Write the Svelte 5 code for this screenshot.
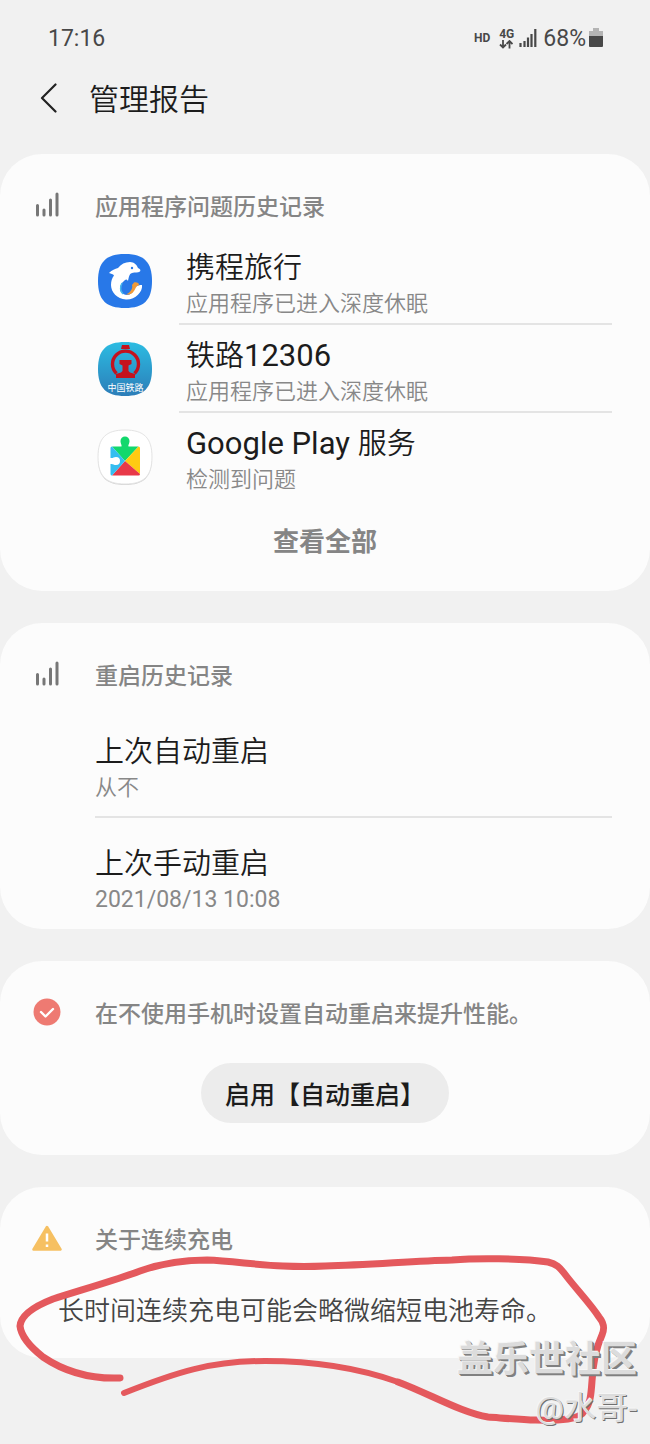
<script lang="ts">
	interface AppIssue {
		id: 'ctrip' | 'railway' | 'play';
		name: string;
		status: string;
	}

	interface RestartRecord {
		label: string;
		value: string;
	}

	const issues: AppIssue[] = [
		{ id: 'ctrip', name: '携程旅行', status: '应用程序已进入深度休眠' },
		{ id: 'railway', name: '铁路12306', status: '应用程序已进入深度休眠' },
		{ id: 'play', name: 'Google Play 服务', status: '检测到问题' },
	];

	const restarts: RestartRecord[] = [
		{ label: '上次自动重启', value: '从不' },
		{ label: '上次手动重启', value: '2021/08/13 10:08' },
	];

	// Rounded-square outline shared by all app icons
	const SQUIRCLE = 'M27 0C46 0 54 8 54 27S46 54 27 54 0 46 0 27 8 0 27 0Z';

	/** Split a string into latin and CJK runs; latin is set a little larger. */
	function runs(text: string): string[] {
		return text.match(/[\x20-\x7e]+|[^\x20-\x7e]+/g) ?? [];
	}

	function isLatin(run: string): boolean {
		return /^[\x20-\x7e]/.test(run);
	}
</script>

{#snippet barsIcon()}
	<svg class="section-icon" viewBox="0 0 30 30" aria-hidden="true">
		<path
			d="M5.500 14.500v9.500M12 19v5M18.500 9v15M25 3v21"
			fill="none"
			stroke="#777"
			stroke-width="3"
			stroke-linecap="round"
		/>
	</svg>
{/snippet}

{#snippet mixed(text: string)}
	{#each runs(text) as run}<span class:latin={isLatin(run)}>{run}</span>{/each}
{/snippet}

<div class="page">
	<div class="status-bar">
		<span class="clock">17:16</span>
		<div class="indicators">
			<span class="hd">HD</span>
			<div class="network">
				<span>4G</span>
				<svg viewBox="0 0 14 9" aria-hidden="true">
					<path d="M4 0v7M1 4.500l3 3 3-3M10.500 8.500v-7M7.500 4l3-3 3 3" fill="none" stroke="#484848" stroke-width="1.800" />
				</svg>
			</div>
			<svg class="signal" viewBox="0 0 18 18" aria-hidden="true">
				<path d="M1.500 14v4M5.500 12v6M9 8.500v9.500M12.500 5v13M16.300 0v18" fill="none" stroke="#484848" stroke-width="2.200" />
			</svg>
			<span class="percent">68%</span>
			<svg class="battery" viewBox="0 0 14 20" aria-hidden="true">
				<path d="M4 0h6v3h4v5H0V3h4Z" fill="#b4b4b4" />
				<path d="M0 8h14v10q0 1-1 1H1q-1 0-1-1Z" fill="#484848" />
			</svg>
		</div>
	</div>

	<header class="title-bar">
		<button class="back" aria-label="返回">
			<svg viewBox="0 0 18 30" aria-hidden="true">
				<path d="M15.500 1.500L2 15l13.500 13.500" fill="none" stroke="#222" stroke-width="2.200" stroke-linecap="round" stroke-linejoin="round" />
			</svg>
		</button>
		<h1>管理报告</h1>
	</header>

	<main>
		<section class="card">
			<div class="section-head">
				{@render barsIcon()}
				<h2>应用程序问题历史记录</h2>
			</div>
			<ul class="list">
				{#each issues as issue (issue.id)}
					<li class="app-row">
						<svg class="app-icon" viewBox="0 0 54 54" aria-hidden="true">
							{#if issue.id === 'ctrip'}
								<path d={SQUIRCLE} fill="#2878e8" />
								<path
									d="M11 19C14 16 17 15 20 14C23 10 27 8 32 8C36 8 39 11 40 14C42 15 43 16 42 17.500C40 19 37 18 34 19C31 20 31 23 30 27C29 25 28 25 26 27C22 30 21 35 23 38C27 43 34 41 35 37C36 33 39 31 44 31C45 38 37 46 28 45.500C19 45 13 38 13 31C13 27 14 24 16 21.500C15 20 13 20 11 19Z"
									fill="#fff"
								/>
								<path d="M36 28.500C39 28 41 29 41 31C38 32 38 34 36 37C34 40 31 41 28 40.500C33 38 35 34 34 31Z" fill="#f09a38" />
								<path d="M24 29c-2 4-2 8 1 11" fill="none" stroke="#46b8ee" stroke-width="1.500" />
								<circle cx="34" cy="14" r="1.200" fill="#2878e8" />
							{:else if issue.id === 'railway'}
								<defs>
									<linearGradient id="railway-bg" x1="0" y1="0" x2="0" y2="1">
										<stop offset="0" stop-color="#2cbce2" />
										<stop offset="1" stop-color="#2c7db8" />
									</linearGradient>
								</defs>
								<path d={SQUIRCLE} fill="url(#railway-bg)" />
								<path d="M18.500 31.500A13 13 0 1 1 36.500 31.500" fill="none" stroke="#c4121e" stroke-width="3.400" />
								<path d="M24 3h7l1 4h-9Z" fill="#c4121e" />
								<path d="M21.500 18h12v4l-3 1.500v5.500l1.500 1.500 5 1.500v4H18v-4l5-1.500 1.500-1.500v-5.500l-3-1.500Z" fill="#c4121e" />
								<text x="27.500" y="49" text-anchor="middle">中国铁路</text>
							{:else}
								<path d={SQUIRCLE} fill="#d4d4d4" transform="translate(0 1)" />
								<path d={SQUIRCLE} fill="#fff" stroke="#e4e4e4" />
								<g transform="translate(0 1)">
									<path d="M14 15.500H23.500C24 13.500 22.500 13 22.500 10a4.500 4.500 0 0 1 9 0C31.500 13 30 13.500 30.500 15.500H40.500L27 30Z" fill="#12d86c" />
									<path d="M40.500 15.500q1.500 0 1.500 1.500V43L27 30Z" fill="#ffca12" />
									<path d="M42 43q0 1.500-1.500 1.500H14L27 30Z" fill="#e83948" />
									<path d="M14 15.500L27 30 14 44.500q-1.500 0-1.500-1.500V33C15 32.500 15.500 34 18 34a4 4 0 0 0 0-8C15.500 26 15 27.500 12.500 27V17q0-1.500 1.500-1.500Z" fill="#35bdf0" />
								</g>
							{/if}
						</svg>
						<div class="app-text">
							<div class="row-title">{@render mixed(issue.name)}</div>
							<div class="row-sub">{issue.status}</div>
						</div>
					</li>
				{/each}
			</ul>
			<button class="view-all">查看全部</button>
		</section>

		<section class="card">
			<div class="section-head">
				{@render barsIcon()}
				<h2>重启历史记录</h2>
			</div>
			<ul class="list">
				{#each restarts as record (record.label)}
					<li class="restart-row">
						<div class="row-title">{record.label}</div>
						<div class="row-sub">{@render mixed(record.value)}</div>
					</li>
				{/each}
			</ul>
		</section>

		<section class="card">
			<div class="section-head">
				<svg class="section-icon" viewBox="0 0 30 30" aria-hidden="true">
					<circle cx="15" cy="14" r="13.500" fill="#ee7a72" />
					<path d="M9 14l4.500 4.500L21 11" fill="none" stroke="#fff" stroke-width="2.400" stroke-linecap="round" stroke-linejoin="round" />
				</svg>
				<h2>在不使用手机时设置自动重启来提升性能。</h2>
			</div>
			<button class="enable">启用【自动重启】</button>
		</section>

		<section class="card">
			<div class="section-head">
				<svg class="section-icon" viewBox="0 0 30 30" aria-hidden="true">
					<path d="M15 3L28.500 25.500H1.500Z" fill="#f6c062" stroke="#f6c062" stroke-width="2.500" stroke-linejoin="round" />
					<path d="M15 9.500v8M15 20.500v2.500" fill="none" stroke="#fff" stroke-width="2.500" />
				</svg>
				<h2>关于连续充电</h2>
			</div>
			<p class="notice">长时间连续充电可能会略微缩短电池寿命。</p>
		</section>
	</main>

	<!-- Hand-drawn circle around the charging notice -->
	<svg class="markup" viewBox="0 0 650 200" aria-hidden="true">
		<path
			d="M120 134C94 135 68 130 43 113C29 102 21 91 20 82C21 71 35 62 53 55C81 46 116 36 140 27C162 19 183 16 207 16C232 17 257 21 283 22Q304 23 325 22C370 21 412 17 452 16C476 14 520 14 548 18C557 20 560 24 564 29C576 45 590 59 599 73C604 79 605 84 602 91C596 104 593 118 592 137C591 152 590 160 585 166C582 172 576 174 568 175C545 178 516 175 488 173C462 169 430 150 398 138"
			stroke-width="7"
		/>
		<path d="M398 138C353 122 303 117 265 117C211 117 177 128 124 149" stroke-width="6" />
	</svg>

	<div class="watermark">
		<span class="community">盖乐世社区</span>
		<span class="author">@水哥-</span>
	</div>
</div>

<style>
	:global(body) {
		margin: 0;
		background: #f1f1f1;
	}

	.page {
		position: relative;
		box-sizing: border-box;
		min-height: 100vh;
		padding-bottom: 86px;
		overflow: hidden;
		background: #f1f1f1;
		color: #1c1c1c;
		font-family: Roboto, 'Noto Sans CJK SC', sans-serif;
	}

	button {
		padding: 0;
		border: none;
		background: none;
		color: inherit;
		font-family: inherit;
		cursor: pointer;
	}

	h1,
	h2,
	p,
	ul {
		margin: 0;
		padding: 0;
	}

	svg {
		display: block;
		flex-shrink: 0;
	}

	.status-bar {
		display: flex;
		align-items: center;
		justify-content: space-between;
		height: 76px;
		padding: 0 47px 0 48px;
		color: #484848;
		font-size: 23px;
	}

	.indicators {
		display: flex;
		align-items: center;
	}

	.hd {
		margin-right: 9px;
		font-size: 12px;
		font-weight: 700;
	}

	.network {
		margin-right: 5px;
		font-size: 12px;
		font-weight: 700;
		line-height: 12px;
	}

	.network svg {
		width: 14px;
		height: 9px;
	}

	.signal {
		width: 18px;
		height: 18px;
		margin-right: 6px;
	}

	.battery {
		width: 14px;
		height: 20px;
		margin-left: 3px;
	}

	.title-bar {
		display: flex;
		align-items: center;
		gap: 31px;
		height: 44px;
		padding: 0 40px 34px;
	}

	.back svg {
		width: 18px;
		height: 30px;
	}

	h1 {
		padding-top: 4px;
		font-size: 30px;
		font-weight: 350;
		line-height: 40px;
	}

	main {
		display: flex;
		flex-direction: column;
		gap: 32px;
	}

	.card {
		padding-top: 30px;
		border-radius: 42px;
		background: #fcfcfc;
	}

	.section-head {
		display: flex;
		align-items: center;
		gap: 33px;
		padding: 0 32px;
	}

	.section-icon {
		width: 30px;
		height: 30px;
	}

	h2 {
		padding-top: 4px;
		color: #858585;
		font-size: 23px;
		font-weight: 500;
		line-height: 40px;
	}

	.list {
		margin-top: 9px;
		list-style: none;
	}

	.app-row {
		display: flex;
		gap: 27px;
		padding: 0 38px 0 98px;
	}

	.app-icon {
		width: 54px;
		height: 54px;
		margin-top: 17px;
		overflow: visible;
	}

	.app-icon text {
		fill: #fff;
		font-family: 'Noto Sans CJK SC', sans-serif;
		font-size: 9px;
	}

	.app-text {
		flex: 1;
		padding: 11px 0 3px 7px;
		border-bottom: 2px solid #e4e4e4;
	}

	.app-row:last-child .app-text {
		border-bottom-color: transparent;
	}

	.row-title {
		height: 40px;
		font-size: 29px;
		font-weight: 350;
		line-height: 40px;
	}

	.row-title .latin {
		font-size: 31px;
		font-weight: 400;
		white-space: pre;
	}

	.row-sub {
		height: 32px;
		color: #888;
		font-size: 22px;
		font-weight: 350;
		line-height: 32px;
	}

	.row-sub .latin {
		font-size: 23px;
		font-weight: 400;
	}

	.view-all {
		display: block;
		margin: 21px auto 0;
		padding-bottom: 29px;
		color: #858585;
		font-size: 26px;
		font-weight: 700;
		line-height: 40px;
	}

	.restart-row {
		margin: 0 38px 0 95px;
		padding: 26px 0 12px;
		border-bottom: 2px solid #e4e4e4;
	}

	.restart-row:last-child {
		padding-bottom: 13px;
		border-bottom: none;
	}

	.enable {
		display: block;
		margin: 28px auto 0;
		padding: 5px 24px 0;
		border-radius: 30px;
		background: #ececec;
		font-size: 25px;
		font-weight: 500;
		line-height: 55px;
	}

	.card:has(.enable) {
		padding-bottom: 32px;
	}

	.notice {
		padding: 32px 58px 29px;
		color: #444;
		font-size: 26px;
		font-weight: 350;
		line-height: 36px;
	}

	.markup {
		position: absolute;
		bottom: 0;
		left: 0;
		width: 100%;
		pointer-events: none;
	}

	.markup path {
		fill: none;
		stroke: #e4595d;
		stroke-linecap: round;
		stroke-linejoin: round;
	}

	.watermark {
		position: absolute;
		right: 13px;
		bottom: 12px;
		display: flex;
		flex-direction: column;
		align-items: flex-end;
		color: #dcdcdc;
		text-shadow:
			-1px -1px 0 #f6f6f6,
			1px 1px 0 #808080,
			2px 2px 0 #808080;
		pointer-events: none;
	}

	.community {
		font-size: 36px;
		font-weight: 700;
		line-height: 48px;
	}

	.author {
		font-size: 32px;
		line-height: 48px;
		text-shadow:
			-1px -1px 0 #f6f6f6,
			1px 1px 0 #707070;
	}
</style>
